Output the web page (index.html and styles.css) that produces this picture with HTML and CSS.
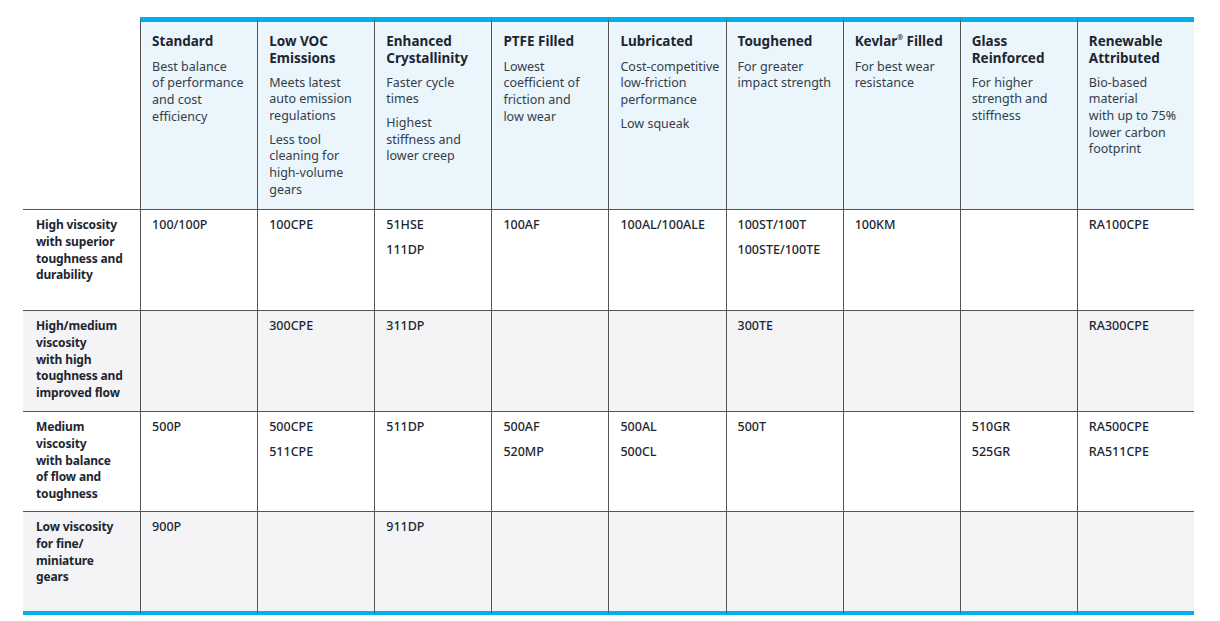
FILE: index.html
```html
<!DOCTYPE html>
<html lang="en">
<head>
<meta charset="utf-8">
<title>Grade selection</title>
<link rel="stylesheet" href="styles.css">
</head>
<body>
<div class="page">
  <div class="grid">
    <div class="corner"></div>
    <div class="hd"><div class="t">Standard</div><p>Best balance<br>of performance<br>and cost<br>efficiency</p></div>
    <div class="hd"><div class="t two">Low VOC<br>Emissions</div><p>Meets latest<br>auto emission<br>regulations</p><p>Less tool<br>cleaning for<br>high-volume<br>gears</p></div>
    <div class="hd"><div class="t two">Enhanced<br>Crystallinity</div><p>Faster cycle<br>times</p><p>Highest<br>stiffness and<br>lower creep</p></div>
    <div class="hd"><div class="t">PTFE Filled</div><p>Lowest<br>coefficient of<br>friction and<br>low wear</p></div>
    <div class="hd"><div class="t">Lubricated</div><p>Cost-competitive<br>low-friction<br>performance</p><p>Low squeak</p></div>
    <div class="hd"><div class="t">Toughened</div><p>For greater<br>impact strength</p></div>
    <div class="hd"><div class="t">Kevlar<sup>®</sup> Filled</div><p>For best wear<br>resistance</p></div>
    <div class="hd"><div class="t two">Glass<br>Reinforced</div><p>For higher<br>strength and<br>stiffness</p></div>
    <div class="hd last"><div class="t two">Renewable<br>Attributed</div><p>Bio-based<br>material<br>with up to 75%<br>lower carbon<br>footprint</p></div>

    <div class="lb">High viscosity<br>with superior<br>toughness and<br>durability</div>
    <div class="c"><p>100/100P</p></div>
    <div class="c"><p>100CPE</p></div>
    <div class="c"><p>51HSE</p><p>111DP</p></div>
    <div class="c"><p>100AF</p></div>
    <div class="c"><p>100AL/100ALE</p></div>
    <div class="c"><p>100ST/100T</p><p>100STE/100TE</p></div>
    <div class="c"><p>100KM</p></div>
    <div class="c"></div>
    <div class="c last"><p>RA100CPE</p></div>

    <div class="lb alt">High/medium<br>viscosity<br>with high<br>toughness and<br>improved flow</div>
    <div class="c alt"></div>
    <div class="c alt"><p>300CPE</p></div>
    <div class="c alt"><p>311DP</p></div>
    <div class="c alt"></div>
    <div class="c alt"></div>
    <div class="c alt"><p>300TE</p></div>
    <div class="c alt"></div>
    <div class="c alt"></div>
    <div class="c alt last"><p>RA300CPE</p></div>

    <div class="lb">Medium<br>viscosity<br>with balance<br>of flow and<br>toughness</div>
    <div class="c"><p>500P</p></div>
    <div class="c"><p>500CPE</p><p>511CPE</p></div>
    <div class="c"><p>511DP</p></div>
    <div class="c"><p>500AF</p><p>520MP</p></div>
    <div class="c"><p>500AL</p><p>500CL</p></div>
    <div class="c"><p>500T</p></div>
    <div class="c"></div>
    <div class="c"><p>510GR</p><p>525GR</p></div>
    <div class="c last"><p>RA500CPE</p><p>RA511CPE</p></div>

    <div class="lb alt end">Low viscosity<br>for fine/<br>miniature<br>gears</div>
    <div class="c alt end"><p>900P</p></div>
    <div class="c alt end"></div>
    <div class="c alt end"><p>911DP</p></div>
    <div class="c alt end"></div>
    <div class="c alt end"></div>
    <div class="c alt end"></div>
    <div class="c alt end"></div>
    <div class="c alt end"></div>
    <div class="c alt end last"></div>
  </div>
</div>
</body>
</html>
```

FILE: styles.css
```css
* { box-sizing: border-box; }
html, body { margin: 0; padding: 0; background: #fff; }
body {
  font-family: "Noto Sans", "Open Sans", sans-serif;
  color: #232f3e;
  width: 1220px;
  height: 621px;
  overflow: hidden;
}
.page { padding: 17px 0 0 23px; }
.grid {
  width: 1171px;
  display: grid;
  grid-template-columns: repeat(10, 117.1px);
  grid-template-rows: 193px 101px 101px 100px 103px;
}
p { margin: 0; white-space: nowrap; }
.corner { border-bottom: 1px solid #555; }
.hd {
  background: #ebf5fc;
  border-top: 5px solid #00b0ec;
  border-left: 1px solid #555;
  border-bottom: 1px solid #555;
  padding: 11px 4px 0 11px;
  font-size: 12.5px;
  line-height: 16.7px;
  color: #333e48;
}
.hd .t {
  font-weight: 700;
  font-size: 13.5px;
  line-height: 17px;
  color: #1d2630;
  margin-bottom: 8.5px;
  white-space: nowrap;
}
.hd .t.two { margin-bottom: 7.5px; }
.hd sup { font-size: 7px; vertical-align: top; line-height: 1; position: relative; top: 1px; }
.hd p + p { margin-top: 7px; }
.lb {
  border-bottom: 1px solid #555;
  padding: 7px 4px 0 13px;
  font-size: 12px;
  letter-spacing: -0.15px;
  font-weight: 700;
  line-height: 16.8px;
  color: #1d2630;
  white-space: nowrap;
}
.c {
  border-left: 1px solid #555;
  border-bottom: 1px solid #555;
  padding: 7px 4px 0 11px;
  font-size: 12.5px;
  font-weight: 500;
  line-height: 16.8px;
  color: #1d2630;
}
.c p + p { margin-top: 8px; }
.alt { background: #f4f4f6; }
.end { border-bottom: 4px solid #00b0ec; }
```
